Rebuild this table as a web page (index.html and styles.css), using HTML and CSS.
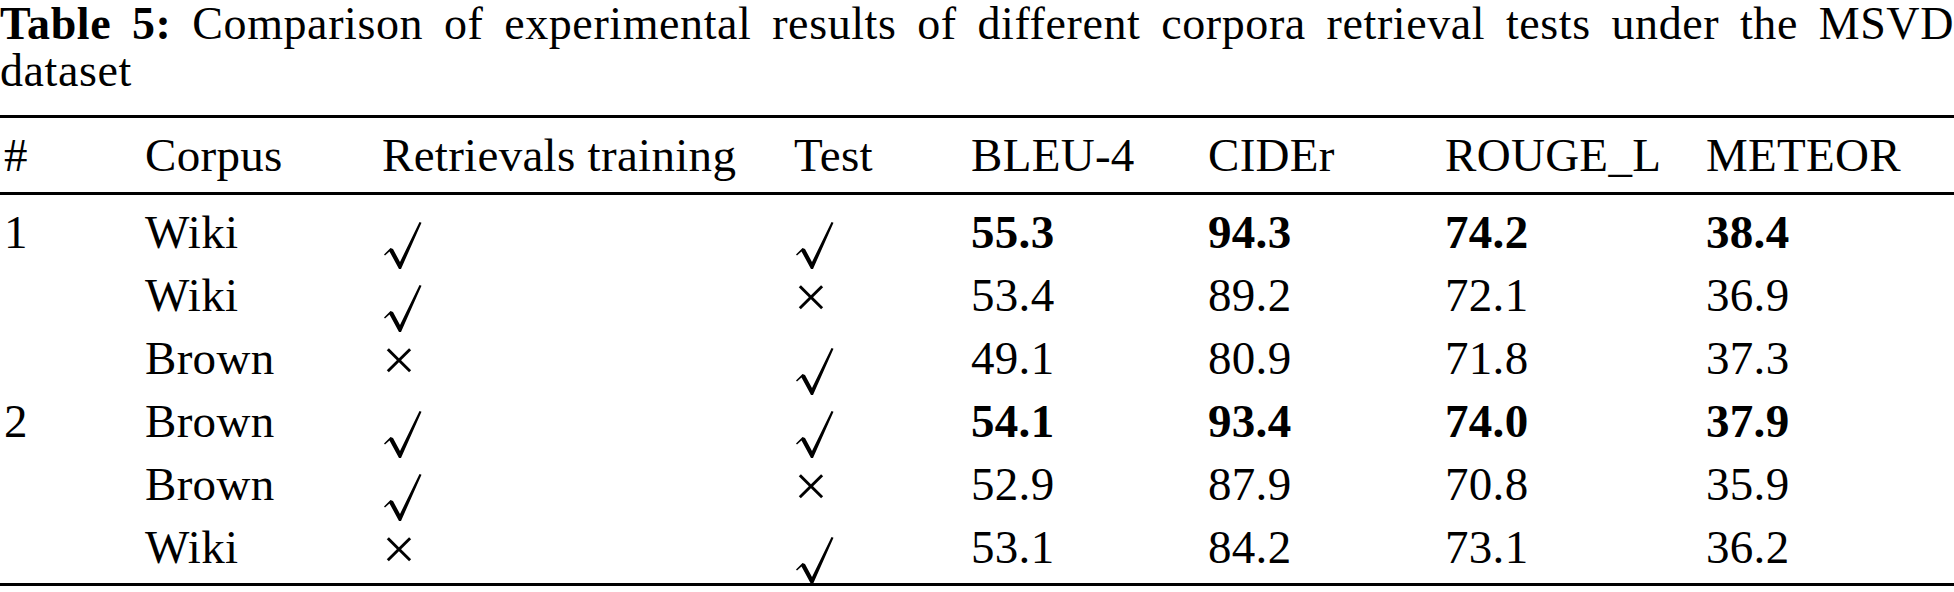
FILE: index.html
```html
<!DOCTYPE html>
<html lang="en">
<head>
    <meta charset="UTF-8">
    <meta name="viewport" content="width=device-width, initial-scale=1.0">
    <title>Table 5</title>
    <link rel="stylesheet" href="styles.css">
</head>
<body>
    <div class="page">
        <p class="caption"><b>Table 5:</b> Comparison of experimental results of different corpora retrieval tests under the MSVD dataset</p>

        <div class="results">
            <div class="row head">
                <span>#</span>
                <span>Corpus</span>
                <span>Retrievals training</span>
                <span>Test</span>
                <span>BLEU-4</span>
                <span>CIDEr</span>
                <span>ROUGE_L</span>
                <span>METEOR</span>
            </div>

            <div class="rows">
                <div class="row">
                    <span>1</span>
                    <span>Wiki</span>
                    <span><svg class="check" viewBox="0 0 38 47" role="img" aria-label="√"><polygon points="0,32.5 6.5,26 9,27 16,40 35.5,0 37.5,0.8 17,47 15,47 5.5,29.5 1,33.5"/></svg></span>
                    <span><svg class="check" viewBox="0 0 38 47" role="img" aria-label="√"><polygon points="0,32.5 6.5,26 9,27 16,40 35.5,0 37.5,0.8 17,47 15,47 5.5,29.5 1,33.5"/></svg></span>
                    <span class="best">55.3</span>
                    <span class="best">94.3</span>
                    <span class="best">74.2</span>
                    <span class="best">38.4</span>
                </div>
                <div class="row">
                    <span></span>
                    <span>Wiki</span>
                    <span><svg class="check" viewBox="0 0 38 47" role="img" aria-label="√"><polygon points="0,32.5 6.5,26 9,27 16,40 35.5,0 37.5,0.8 17,47 15,47 5.5,29.5 1,33.5"/></svg></span>
                    <span><i class="cross">×</i></span>
                    <span>53.4</span>
                    <span>89.2</span>
                    <span>72.1</span>
                    <span>36.9</span>
                </div>
                <div class="row">
                    <span></span>
                    <span>Brown</span>
                    <span><i class="cross">×</i></span>
                    <span><svg class="check" viewBox="0 0 38 47" role="img" aria-label="√"><polygon points="0,32.5 6.5,26 9,27 16,40 35.5,0 37.5,0.8 17,47 15,47 5.5,29.5 1,33.5"/></svg></span>
                    <span>49.1</span>
                    <span>80.9</span>
                    <span>71.8</span>
                    <span>37.3</span>
                </div>
                <div class="row">
                    <span>2</span>
                    <span>Brown</span>
                    <span><svg class="check" viewBox="0 0 38 47" role="img" aria-label="√"><polygon points="0,32.5 6.5,26 9,27 16,40 35.5,0 37.5,0.8 17,47 15,47 5.5,29.5 1,33.5"/></svg></span>
                    <span><svg class="check" viewBox="0 0 38 47" role="img" aria-label="√"><polygon points="0,32.5 6.5,26 9,27 16,40 35.5,0 37.5,0.8 17,47 15,47 5.5,29.5 1,33.5"/></svg></span>
                    <span class="best">54.1</span>
                    <span class="best">93.4</span>
                    <span class="best">74.0</span>
                    <span class="best">37.9</span>
                </div>
                <div class="row">
                    <span></span>
                    <span>Brown</span>
                    <span><svg class="check" viewBox="0 0 38 47" role="img" aria-label="√"><polygon points="0,32.5 6.5,26 9,27 16,40 35.5,0 37.5,0.8 17,47 15,47 5.5,29.5 1,33.5"/></svg></span>
                    <span><i class="cross">×</i></span>
                    <span>52.9</span>
                    <span>87.9</span>
                    <span>70.8</span>
                    <span>35.9</span>
                </div>
                <div class="row">
                    <span></span>
                    <span>Wiki</span>
                    <span><i class="cross">×</i></span>
                    <span><svg class="check" viewBox="0 0 38 47" role="img" aria-label="√"><polygon points="0,32.5 6.5,26 9,27 16,40 35.5,0 37.5,0.8 17,47 15,47 5.5,29.5 1,33.5"/></svg></span>
                    <span>53.1</span>
                    <span>84.2</span>
                    <span>73.1</span>
                    <span>36.2</span>
                </div>
            </div>
        </div>
    </div>
</body>
</html>
```

FILE: styles.css
```css
body {
    margin: 0;
    padding: 0;
    background-color: #ffffff;
    color: #000000;
    font-family: "Liberation Serif", "Times New Roman", serif;
}
.page {
    width: 1954px;
}
.caption {
    margin: 0;
    font-size: 46px;
    line-height: 47px;
    letter-spacing: 0.6px;
    text-align: justify;
}
.caption b {
    font-weight: bold;
}
.results {
    margin-top: 21px;
    border-top: 3px solid #000;
    border-bottom: 3px solid #000;
    font-size: 47px;
    letter-spacing: 0.3px;
}
.row {
    display: grid;
    grid-template-columns: 141px 237px 412px 177px 237px 237px 261px 1fr;
    height: 63px;
    line-height: 63px;
}
.row span {
    padding-left: 4px;
    white-space: nowrap;
}
.head {
    height: 74px;
    line-height: 74px;
    border-bottom: 3px solid #000;
}
.rows {
    padding: 6px 0 4px;
}
.best {
    font-weight: bold;
}
.check {
    width: 38px;
    height: 47px;
    margin-left: 2px;
    vertical-align: -21px;
    fill: #000;
}
.cross {
    font-style: normal;
    font-size: 60px;
    vertical-align: -6px;
}
```
